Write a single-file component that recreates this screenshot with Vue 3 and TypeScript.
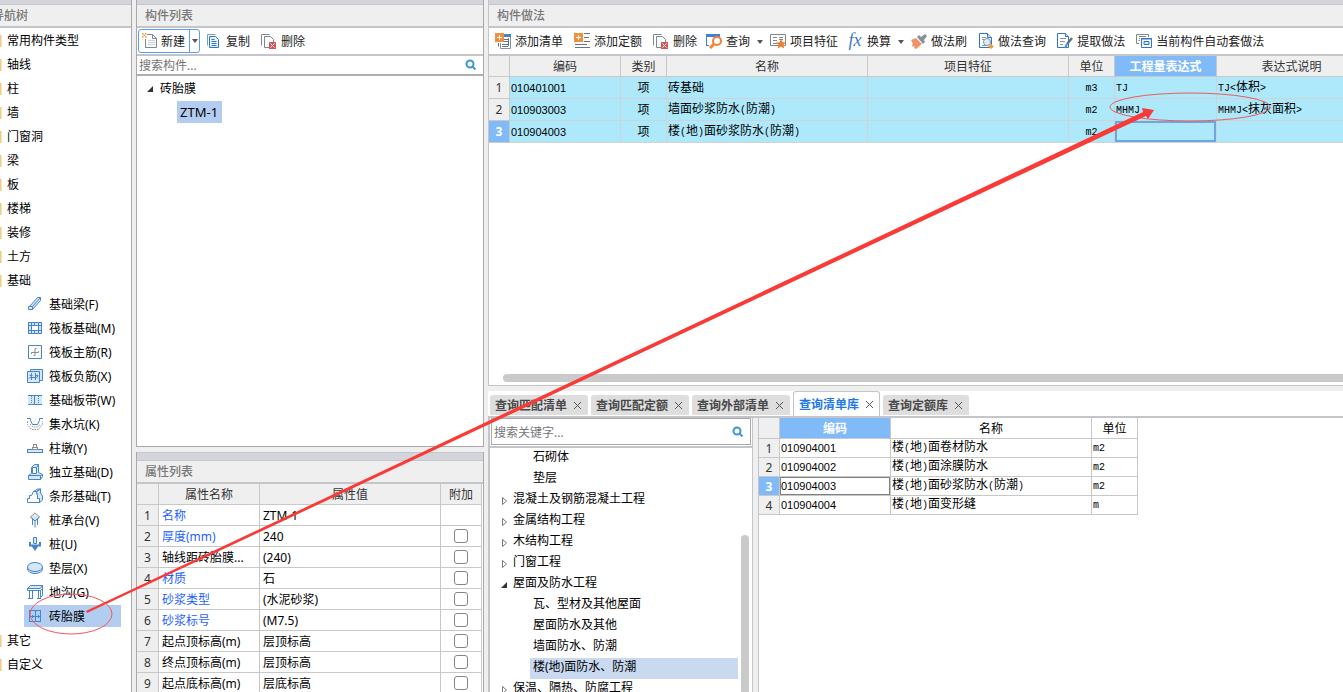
<script setup lang="ts">
import { ref } from 'vue'

interface Tool {
  icon: string
  label: string
  menu?: boolean
}

const B = 'fill="none" stroke="#4584cf"'
const L = 'fill="#d6e7f9" stroke="#4584cf"'

const icons: Record<string, string> = {
  beam: `<path ${L} d="M2.500 10.500l8-9h3v3l-8 9h-4v-3z"/><path ${B} d="M2.500 10.500h3v3M5.500 10.500l8-9"/>`,
  raft: `<g shape-rendering="crispEdges"><path ${L} d="M1.500 2.500h13v11h-13z"/><path fill="#fff" stroke="#4584cf" d="M4.500 5.500h7v5h-7z"/><path ${B} d="M4.500 2v12M11.500 2v12M1 5.500h14M1 10.500h14M7.500 2v3M7.500 11v3"/></g>`,
  rebar: `<path fill="#fff" stroke="#4584cf" d="M1.500 1.500h13v13h-13z"/><path fill="none" stroke="#858c94" d="M4.500 10v-1.500h7V7M9.500 4.500H8v7H6.500"/>`,
  negative: `<path ${L} d="M3.500 1.500h12v11h-12z"/><path ${L} d="M.5 3.500h12v11H.5z"/><path ${B} d="M4.500 5v7M8.500 5v7M2 10.500q0-1 2-1h5q2 0 2-2M2.500 7.500h3M8 7.500h3"/>`,
  band: `<g shape-rendering="crispEdges"><path fill="#d6e7f9" d="M1 3h14v10H1z"/><path ${B} d="M1 3.500h14M1 12.500h14M7.500 3v10"/><path ${B} stroke-dasharray="1 1" d="M4.500 4v9M11.500 4v9"/></g>`,
  pit: `<path ${B} d="M0 2.500h3.500v2l2 4h5l2-4v-2H16"/><path fill="none" stroke="#8d949c" stroke-dasharray="1.500 1" d="M.5 5.500v3l4 5h7l4-5v-3M3 8l3 3h5l2-3"/>`,
  pier: `<g shape-rendering="crispEdges"><path ${L} d="M.5 9.500h15v3H.5z"/><path fill="#fff" stroke="#858c94" d="M5.500 7.500h5v2h-5zM6.500 4.500h3v3h-3z"/></g>`,
  isolated: `<path ${L} d="M1.500 11.500l3-2v-6l3-3h4v8l4 2v2l-2 3h-12z"/><path fill="#fff" stroke="#4584cf" d="M5.500 9.500v-6h4v6z"/><path ${B} d="M9.500 3.500l2-3M1.500 11.500h12l2-1M13.500 11.500v4"/>`,
  strip: `<path fill="#fff" stroke="#4584cf" d="M.5 14.500v-4h2v-3h2l2-4h3l1 4v3h2v4z"/><path ${L} d="M6.500 3.500l4-2.500h3l-4 2.500zM9.500 3.500l4-2.500v4l2 3v4l-3 2.500v-4h-2v-3z"/>`,
  cap: `<path fill="#dfe3e8" stroke="#98a0a8" d="M8 .8l4.500 4L8 9 3.500 4.800z"/><path ${B} d="M3.500 5l4.500 4 4.500-4M5.500 7v6M8 9v6.500M10.500 7v6"/>`,
  pile: `<path ${L} d="M6.500 1.500h3v6h-3z"/><path fill="none" stroke="#4584cf" stroke-width="2" d="M3 6v3.500h10V6"/><path fill="#4584cf" d="M4.500 10h7L8 15z"/>`,
  cushion: `<ellipse ${L} cx="8" cy="9" rx="7.500" ry="4.500"/><ellipse ${L} cx="8" cy="7" rx="7.500" ry="4.500"/>`,
  trench: `<path ${L} d="M3.500 1.500h12l-2 3H.5z"/><path ${B} d="M.5 4.500v2h13l2-2v-3M2.500 6.500v8M5.500 6.500v8M11.500 6.500v8M13.500 6.500v7l2-2v-7M1 14.500h5M10 14.500h4"/>`,
  brick: `<g shape-rendering="crispEdges"><path ${B} d="M2.500 2.500h11v11h-11zM8.500 2.500v6M2 8.500h12M8.500 8.500v5"/><path ${B} d="M5.500 7v3M11.500 7v3"/></g>`,
  create: `<path fill="#fff" stroke="#7d8790" d="M3.500 1.500h7l4 4v9h-11z"/><path fill="none" stroke="#7d8790" d="M10.500 1.500v4h4"/><path stroke="#ccd" d="M6 7.500h7M6 9.500h7M6 11.500h7"/><path fill="#fff" d="M0 0h5v6H0z"/><path fill="#f39a2c" d="M0 0h1.500v1.500H0zM3 0h1.500v1.500H3zM1.500 1.500H3V3H1.500zM0 3h1.500v1.500H0zM3 3h1.500v1.500H3z"/>`,
  copy: `<path fill="#fff" stroke="#6f9fd8" d="M1.500 12.500v-11h8"/><path fill="#eaf3fd" stroke="#2f74c8" d="M3.500 3.500h6l3 3v8h-9z"/><path stroke="#2f74c8" d="M5.500 6.500h3M5.500 8.500h5M5.500 10.500h5M5.500 12.500h5"/>`,
  remove: `<path fill="none" stroke="#7d8790" d="M.5 12.500v-11h8"/><path fill="#fff" stroke="#7d8790" d="M3.500 14.500v-11h6l3 3v8z"/><path fill="#d95350" d="M8 9h7v7H8z"/><path stroke="#fff" d="M9.500 10.500l4 4M13.500 10.500l-4 4"/>`,
  addlist: `<path fill="#fff" stroke="#8492a0" d="M5.500 10v5.500h10V3h-6"/><path fill="#3d82d6" d="M9 1h7v3H9z"/><path stroke="#5f7387" d="M9 6.500h4M9 8.500h4M3.500 10v3.500M7 11.500h6M7 13.500h6M13.500 5v8"/><path fill="#f0903c" d="M0 0h9v9H0z"/><path stroke="#fff" d="M2 4.500h5M4.500 2v5"/>`,
  addquota: `<path stroke="#68727c" d="M10 .5h6M10 4.500h5M10 8.500h6M1 11.500h12M1 14.500h15"/><path fill="#f0903c" d="M0 0h9v9H0z"/><path stroke="#fff" d="M2 4.500h5M4.500 2v5"/>`,
  query: `<path fill="#3d82d6" d="M0 1h14v3H0z"/><path stroke="#3d82d6" d="M.5 1v12M0 12.500h3"/><circle cx="11" cy="8" r="4" fill="#fff" stroke="#f0843a" stroke-width="2"/><path stroke="#f0843a" stroke-width="3" d="M8 11l-4 4"/>`,
  feature: `<path fill="#fff" stroke="#7d8790" d="M.5 1.500h15v11H.5z"/><path stroke="#7d8790" d="M3 4.500h4M3 7.500h4M3 10.500h4M9 4.500h4M9 6.500h4"/><path fill="#f07c28" d="M11 6l1.500 3.200 3.500.3-2.600 2.300.8 3.700-3.200-1.900-3.200 1.900.8-3.700L6 9.500l3.500-.3z"/>`,
  brush: `<path fill="#f09468" d="M0 7l5-2 6 6-6 5-2-1 1-2-2 1-1-2 1-1z"/><path fill="#87919b" d="M6 4l2-2 2 2 4-3 2 2-3 4 1 2-2 2z"/>`,
  methodquery: `<path fill="#fff" stroke="#2f74c8" d="M1.500.5h8l4 4v10h-12z"/><path fill="#cfe1f6" stroke="#2f74c8" d="M9.500.5v4h4"/><path stroke="#8496aa" d="M4 4.500h4M4 6.500h2M4 12.500h4"/><circle cx="9" cy="9" r="3.500" fill="#e3edf8" stroke="#7893b5"/><path fill="#f39a2c" d="M13 11l3 2.500-3 2.500-3-2.500z"/>`,
  extract: `<path fill="#fff" stroke="#2f74c8" d="M.5.5h8l3 3v11H.5z"/><path fill="#cfe1f6" stroke="#2f74c8" d="M8.500.5v3h3"/><path stroke="#8496aa" d="M3 5.500h6M3 8.500h5M3 11.500h3"/><path stroke="#66717c" stroke-width="2.500" d="M15 5l-5 6"/><path stroke="#3a94e2" stroke-width="2" d="M10 11l-2 4"/>`,
  auto: `<path fill="#fff" stroke="#7d8790" d="M3 10.500H.5v-9h12V4M3 3.500h7M3 5.500h1M2.500 7.500H4"/><path fill="#fff" stroke="#2f74c8" d="M5.500 5.500h10v9h-10z"/><path stroke="#2f74c8" d="M5 6h11M8 8.500h5v3H8z" fill="#d6e7f9"/>`,
}

const categories = ['常用构件类型', '轴线', '柱', '墙', '门窗洞', '梁', '板', '楼梯', '装修', '土方', '基础']
const foundation = [
  { icon: 'beam', label: '基础梁(F)' },
  { icon: 'raft', label: '筏板基础(M)' },
  { icon: 'rebar', label: '筏板主筋(R)' },
  { icon: 'negative', label: '筏板负筋(X)' },
  { icon: 'band', label: '基础板带(W)' },
  { icon: 'pit', label: '集水坑(K)' },
  { icon: 'pier', label: '柱墩(Y)' },
  { icon: 'isolated', label: '独立基础(D)' },
  { icon: 'strip', label: '条形基础(T)' },
  { icon: 'cap', label: '桩承台(V)' },
  { icon: 'pile', label: '桩(U)' },
  { icon: 'cushion', label: '垫层(X)' },
  { icon: 'trench', label: '地沟(G)' },
  { icon: 'brick', label: '砖胎膜' },
]
const others = ['其它', '自定义']
const current = ref('砖胎膜')

const tools: Tool[] = [
  { icon: 'addlist', label: '添加清单' },
  { icon: 'addquota', label: '添加定额' },
  { icon: 'remove', label: '删除' },
  { icon: 'query', label: '查询', menu: true },
  { icon: 'feature', label: '项目特征' },
  { icon: 'fx', label: '换算', menu: true },
  { icon: 'brush', label: '做法刷' },
  { icon: 'methodquery', label: '做法查询' },
  { icon: 'extract', label: '提取做法' },
  { icon: 'auto', label: '当前构件自动套做法' },
]

const methods = [
  { code: '010401001', kind: '项', name: '砖基础', unit: 'm3', expr: 'TJ', note: 'TJ<体积>' },
  { code: '010903003', kind: '项', name: '墙面砂浆防水(防潮)', unit: 'm2', expr: 'MHMJ', note: 'MHMJ<抹灰面积>' },
  { code: '010904003', kind: '项', name: '楼(地)面砂浆防水(防潮)', unit: 'm2', expr: '', note: '' },
]

const props = ref([
  { name: '名称', value: 'ZTM-1', blue: true },
  { name: '厚度(mm)', value: '240', blue: true, extra: false },
  { name: '轴线距砖胎膜...', value: '(240)', blue: false, extra: false },
  { name: '材质', value: '石', blue: true, extra: false },
  { name: '砂浆类型', value: '(水泥砂浆)', blue: true, extra: false },
  { name: '砂浆标号', value: '(M7.5)', blue: true, extra: false },
  { name: '起点顶标高(m)', value: '层顶标高', blue: false, extra: false },
  { name: '终点顶标高(m)', value: '层顶标高', blue: false, extra: false },
  { name: '起点底标高(m)', value: '层底标高', blue: false, extra: false },
])

const tabs = ['查询匹配清单', '查询匹配定额', '查询外部清单', '查询清单库', '查询定额库']
const activeTab = ref('查询清单库')

const chapters = [
  { label: '石砌体', level: 2 },
  { label: '垫层', level: 2 },
  { label: '混凝土及钢筋混凝土工程', level: 1 },
  { label: '金属结构工程', level: 1 },
  { label: '木结构工程', level: 1 },
  { label: '门窗工程', level: 1 },
  { label: '屋面及防水工程', level: 1, open: true },
  { label: '瓦、型材及其他屋面', level: 2 },
  { label: '屋面防水及其他', level: 2 },
  { label: '墙面防水、防潮', level: 2 },
  { label: '楼(地)面防水、防潮', level: 2 },
  { label: '保温、隔热、防腐工程', level: 1 },
]
const chapter = ref('楼(地)面防水、防潮')

const results = [
  { code: '010904001', name: '楼(地)面卷材防水', unit: 'm2' },
  { code: '010904002', name: '楼(地)面涂膜防水', unit: 'm2' },
  { code: '010904003', name: '楼(地)面砂浆防水(防潮)', unit: 'm2' },
  { code: '010904004', name: '楼(地)面变形缝', unit: 'm' },
]

const componentSearch = ref('')
const keyword = ref('')

// Splits a grid text into half-width and full-width runs.
function runs(text: string): { text: string; half: boolean }[] {
  return (text.match(/[\x20-\x7e]+|[^\x20-\x7e]+/g) ?? []).map((t) => ({
    text: t,
    half: t.charCodeAt(0) < 127,
  }))
}
</script>

<template>
  <div class="app">
    <nav class="nav panel">
      <div class="strip"></div>
      <h2 class="title nav-title">导航树</h2>
      <ul class="tree">
        <li v-for="c in categories" :key="c"><button class="category">{{ c }}</button></li>
        <li v-for="f in foundation" :key="f.label">
          <button class="leaf" :class="{ on: current === f.label }" @click="current = f.label">
            <svg class="icon" viewBox="0 0 16 16" v-html="icons[f.icon]"></svg>{{ f.label }}
          </button>
        </li>
        <li v-for="c in others" :key="c"><button class="category">{{ c }}</button></li>
      </ul>
    </nav>

    <div class="middle">
      <section class="panel components">
        <div class="strip"></div>
        <h2 class="title">构件列表</h2>
        <div class="toolbar">
          <div class="split">
            <button class="split-main"><svg class="icon" viewBox="0 0 16 16" v-html="icons.create"></svg>新建</button>
            <button class="split-arrow" aria-label="新建选项"><i class="caret"></i></button>
          </div>
          <button class="tool"><svg class="icon" viewBox="0 0 16 16" v-html="icons.copy"></svg>复制</button>
          <button class="tool"><svg class="icon" viewBox="0 0 16 16" v-html="icons.remove"></svg>删除</button>
        </div>
        <div class="search">
          <input v-model="componentSearch" type="text" placeholder="搜索构件..." aria-label="搜索构件" />
          <svg class="lens" viewBox="0 0 12 12"><circle cx="5" cy="5" r="3.500" /><path d="M7.500 7.500l3 3" /></svg>
        </div>
        <ul class="tree">
          <li><button class="group"><svg class="tri" viewBox="0 0 8 8"><path class="open" d="M7 1v6H1z" /></svg>砖胎膜</button></li>
          <li><button class="item">ZTM-1</button></li>
        </ul>
      </section>

      <section class="panel properties">
        <div class="strip"></div>
        <h2 class="title">属性列表</h2>
        <table class="props">
          <colgroup><col class="w22" /><col class="w101" /><col /><col class="w41" /></colgroup>
          <thead>
            <tr><th></th><th>属性名称</th><th>属性值</th><th>附加</th></tr>
          </thead>
          <tbody>
            <tr v-for="(p, i) in props" :key="p.name">
              <th>{{ i + 1 }}</th>
              <td :class="{ blue: p.blue }">{{ p.name }}</td>
              <td>{{ p.value }}</td>
              <td class="check"><input v-if="p.extra !== undefined" v-model="p.extra" type="checkbox" :aria-label="p.name" /></td>
            </tr>
          </tbody>
        </table>
      </section>
    </div>

    <main class="right">
      <section class="panel methods">
        <div class="strip"></div>
        <h2 class="title">构件做法</h2>
        <div class="toolbar">
          <button v-for="t in tools" :key="t.label" class="tool" :class="{ menu: t.menu }">
            <span v-if="t.icon === 'fx'" class="icon fx">fx</span>
            <svg v-else class="icon" viewBox="0 0 16 16" v-html="icons[t.icon]"></svg>{{ t.label }}<i v-if="t.menu" class="caret"></i>
          </button>
        </div>
        <table class="grid bill">
          <colgroup>
            <col class="w21" /><col class="w111" /><col class="w46" /><col class="w201" /><col class="w201" />
            <col class="w46" /><col class="w102" /><col class="w150" />
          </colgroup>
          <thead>
            <tr>
              <th></th><th>编码</th><th>类别</th><th>名称</th><th>项目特征</th><th>单位</th>
              <th class="on">工程量表达式</th><th>表达式说明</th>
            </tr>
          </thead>
          <tbody>
            <tr v-for="(m, i) in methods" :key="m.code">
              <th :class="{ on: i === 2 }">{{ i + 1 }}</th>
              <td class="code">{{ m.code }}</td>
              <td class="mid">{{ m.kind }}</td>
              <td><span v-for="(r, k) in runs(m.name)" :key="k" :class="{ half: r.half }">{{ r.text }}</span></td>
              <td></td>
              <td class="mid"><span class="half">{{ m.unit }}</span></td>
              <td :class="{ cursor: i === 2 }"><span class="half">{{ m.expr }}</span></td>
              <td><span v-for="(r, k) in runs(m.note)" :key="k" :class="{ half: r.half }">{{ r.text }}</span></td>
            </tr>
          </tbody>
        </table>
        <div class="hscroll"></div>
      </section>

      <section class="library">
        <div class="tabs">
          <div v-for="t in tabs" :key="t" class="tab" :class="{ on: activeTab === t }">
            <button class="tab-name" @click="activeTab = t">{{ t }}</button>
            <button class="close" :aria-label="'关闭' + t">
              <svg viewBox="0 0 9 9"><path d="M1 1l7 7M8 1l-7 7" /></svg>
            </button>
          </div>
        </div>
        <div class="lib-body">
          <div class="chapters">
            <div class="search boxed">
              <input v-model="keyword" type="text" placeholder="搜索关键字..." aria-label="搜索关键字" />
              <svg class="lens" viewBox="0 0 12 12"><circle cx="5" cy="5" r="3.500" /><path d="M7.500 7.500l3 3" /></svg>
            </div>
            <div class="chapter-list">
              <ul>
                <li v-for="c in chapters" :key="c.label">
                  <button :class="['chapter', 'level' + c.level, { on: chapter === c.label }]" @click="chapter = c.label">
                    <svg v-if="c.level === 1" class="tri" viewBox="0 0 8 8">
                      <path v-if="c.open" class="open" d="M7 1v6H1z" /><path v-else class="shut" d="M2.500 .5L6.500 4l-4 3.500z" />
                    </svg>{{ c.label }}
                  </button>
                </li>
              </ul>
              <div class="vscroll"></div>
            </div>
          </div>
          <div class="results">
            <table class="grid found">
              <colgroup><col class="w21" /><col class="w111" /><col class="w201" /><col class="w46" /></colgroup>
              <thead>
                <tr><th></th><th class="on">编码</th><th>名称</th><th>单位</th></tr>
              </thead>
              <tbody>
                <tr v-for="(r, i) in results" :key="r.code">
                  <th :class="{ on: i === 2 }">{{ i + 1 }}</th>
                  <td class="code" :class="{ focus: i === 2 }">{{ r.code }}</td>
                  <td><span v-for="(s, k) in runs(r.name)" :key="k" :class="{ half: s.half }">{{ s.text }}</span></td>
                  <td><span class="half">{{ r.unit }}</span></td>
                </tr>
              </tbody>
            </table>
          </div>
        </div>
      </section>
    </main>

    <svg class="marks" aria-hidden="true">
      <ellipse cx="71" cy="614" rx="41" ry="20" />
      <ellipse cx="1190" cy="107" rx="80" ry="14" />
      <path d="M86 611L1143 112l-1-4 12 2-6 9-2-3L87 613z" />
    </svg>
  </div>
</template>

<style>
body {
  margin: 0;
  overflow: hidden;
}
</style>

<style scoped>
.app {
  position: relative;
  display: grid;
  grid-template-columns: 132px 348px minmax(0, 1fr);
  column-gap: 4px;
  height: 100vh;
  overflow: hidden;
  background: #efefef;
  color: #000;
  font: 12px/18px "Noto Sans", "Noto Sans CJK SC", sans-serif;
}
.app * {
  box-sizing: border-box;
}
button {
  display: flex;
  align-items: center;
  margin: 0;
  padding: 0;
  border: 0;
  background: none;
  color: inherit;
  font: inherit;
  white-space: nowrap;
}
input {
  font: inherit;
}
ul {
  margin: 0;
  padding: 0;
  list-style: none;
}
.icon {
  flex: none;
  width: 16px;
  height: 16px;
  margin-top: -2px;
}
.panel {
  background: #fff;
}
.strip {
  height: 5px;
  background: #d4d5da;
  border-bottom: 1px solid #c6c7ce;
}
.title {
  height: 23px;
  margin: 0;
  padding-left: 8px;
  border-bottom: 2px solid #c4c4cb;
  background: #efefef;
  color: #787878;
  font-size: 12px;
  font-weight: 500;
  line-height: 21px;
}

/* Navigation */
.nav {
  border-right: 1px solid #a9a9a9;
  overflow: hidden;
}
.nav-title {
  padding: 0;
  text-indent: -8px;
}
.tree li {
  display: flex;
  align-items: center;
  height: 24px;
}
.category {
  height: 24px;
  padding-top: 2px;
  gap: 5px;
}
.category::before {
  content: "";
  width: 2px;
  height: 12px;
  background: linear-gradient(90deg, #f2cb85 1px, #f9e3b8 1px);
}
.leaf {
  gap: 6px;
  width: 97px;
  height: 22px;
  margin-left: 24px;
  padding: 2px 0 0 3px;
}
.leaf.on {
  background: #b3cdf0;
}

/* Component list and properties */
.middle {
  display: flex;
  flex-direction: column;
  gap: 5px;
  min-height: 0;
}
.middle .panel {
  border-left: 1px solid #a9a9a9;
  border-right: 1px solid #a9a9a9;
}
.components {
  flex: 1;
  border-bottom: 1px solid #a9a9a9;
}
.properties {
  height: 240px;
  flex: none;
  overflow: hidden;
}
.properties .strip {
  height: 9px;
  border-top: 1px solid #c6c7ce;
}
.toolbar {
  display: flex;
  align-items: center;
  gap: 1px;
  height: 28px;
  padding: 0 1px;
  border-bottom: 2px solid #c4c4cb;
  color: #222;
}
.tool {
  gap: 4px;
  height: 22px;
  padding: 2px 5px 0;
}
.tool.menu {
  padding: 2px 1px 0 3px;
}
.caret {
  width: 0;
  height: 0;
  border: 3px solid transparent;
  border-top: 4px solid #555;
  border-bottom: 0;
}
.tool .caret {
  margin-left: 3px;
}
.fx {
  color: #3f7cc4;
  font: italic 18px/14px "Liberation Serif", serif;
}
.split {
  display: flex;
  height: 24px;
  border: 1px solid #5b9fe6;
  border-radius: 3px;
}
.split-main {
  gap: 3px;
  padding: 2px 4px 0 3px;
}
.split-arrow {
  padding: 0 1px 0 2px;
  border-left: 1px solid #5b9fe6;
}
.search {
  display: flex;
  align-items: center;
  height: 20px;
  padding-right: 6px;
  border-bottom: 2px solid #aeaeae;
  background: #fff;
}
.search input {
  flex: 1;
  min-width: 0;
  height: 18px;
  padding: 2px 2px 0;
  border: 0;
  outline: 0;
  background: none;
}
.search input::placeholder {
  color: #757575;
  opacity: 1;
}
.lens {
  width: 12px;
  height: 12px;
  fill: none;
  stroke: #3f97cf;
  stroke-width: 2;
}
.tri {
  flex: none;
  width: 8px;
  height: 8px;
}
.open {
  fill: #333;
}
.shut {
  fill: #fff;
  stroke: #777;
}
.group {
  gap: 6px;
  padding: 2px 0 0 9px;
}
.item {
  height: 22px;
  margin-left: 40px;
  padding: 0 4px 0 3px;
  background: #b3cdf0;
  font-size: 13px;
}

/* Tables */
table {
  table-layout: fixed;
  border-collapse: separate;
  border-spacing: 0;
}
th,
td {
  overflow: hidden;
  padding: 0;
  border-right: 1px solid #c8c8c8;
  border-bottom: 1px solid #c8c8c8;
  font-weight: 400;
  white-space: nowrap;
  line-height: 18px;
}
th {
  background: #efefef;
  color: #333;
}
thead th {
  padding-top: 2px;
}
.w21 { width: 21px; }
.w22 { width: 22px; }
.w41 { width: 41px; }
.w46 { width: 46px; }
.w101 { width: 101px; }
.w102 { width: 102px; }
.w111 { width: 111px; }
.w150 { width: 150px; }
.w201 { width: 201px; }
.props {
  width: 345px;
}
.props th,
.props td {
  height: 21px;
  padding-top: 2px;
}
.props td {
  padding-left: 3px;
}
.props .blue {
  color: #1f5fff;
}
.props .check {
  padding: 0;
  text-align: center;
}
.check input {
  display: block;
  width: 14px;
  height: 14px;
  margin: 0 auto;
  border: 1px solid #858585;
  border-radius: 3px;
  appearance: none;
  background: #fff;
}
.check input:checked {
  background: #4584cf;
}
.grid th.on {
  background: #80baf9;
  color: #fff;
  font-weight: 700;
}
.grid td {
  padding-left: 1px;
}
.grid .mid {
  padding: 0;
  text-align: center;
}
.code {
  font-family: "Liberation Sans", sans-serif;
  font-size: 11px;
}
.half {
  font-family: "Liberation Mono", monospace;
  font-size: 10px;
}
.bill {
  width: 878px;
}
.bill thead th {
  height: 21px;
}
.bill tbody th,
.bill td {
  height: 22px;
}
.bill td {
  border-color: #d0d3d6;
  background: #ade8fb;
}
.bill .cursor {
  box-shadow: inset 0 0 0 2px #6ba6e6;
}
.found {
  width: 379px;
}
.found thead th {
  height: 21px;
}
.found thead th:nth-child(n + 3) {
  background: #fff;
  color: #000;
}
.found tbody th,
.found td {
  height: 19px;
  line-height: 14px;
}
.found tbody th {
  padding-top: 2px;
}
.found .focus {
  box-shadow: inset 0 0 0 1px #808080;
}

/* Right side */
.right {
  display: flex;
  flex-direction: column;
  gap: 5px;
  min-width: 0;
  min-height: 0;
}
.methods {
  display: flex;
  flex-direction: column;
  flex: 0 0 386px;
  overflow: hidden;
  border-left: 1px solid #c4c4cb;
  border-bottom: 1px solid #c4c4c4;
}
.hscroll {
  flex: none;
  height: 8px;
  margin: auto 0 3px 14px;
  border-radius: 4px 0 0 4px;
  background: #cacaca;
}
.library {
  display: flex;
  flex: 1;
  flex-direction: column;
  min-height: 0;
  background: #fff;
}
.tabs {
  display: flex;
  flex: none;
  align-items: flex-end;
  gap: 3px;
  height: 27px;
  padding-left: 2px;
  border-bottom: 2px solid #c4c4cb;
}
.tab {
  display: flex;
  gap: 6px;
  height: 20px;
  margin-bottom: 1px;
  padding: 0 6px 0 5px;
  border-radius: 3px 3px 0 0;
  background: #dedede;
  color: #484848;
  font-weight: 700;
}
.tab-name {
  padding-top: 2px;
}
.tab.on {
  height: 25px;
  margin-bottom: 0;
  padding: 0 5px;
  border: 1px solid #c4c4cb;
  border-bottom: 0;
  background: #fff;
  color: #1e78e6;
}
.close svg {
  width: 9px;
  height: 9px;
  stroke: #555;
}
.lib-body {
  display: grid;
  grid-template-columns: 265px minmax(0, 1fr);
  column-gap: 5px;
  flex: 1;
  min-height: 0;
  background: #efefef;
}
.chapters {
  display: flex;
  flex-direction: column;
  min-height: 0;
  border-left: 2px solid #c4c4cb;
  border-right: 1px solid #c4c4cb;
  background: #fff;
}
.boxed {
  flex: none;
  height: 27px;
  margin: 0 1px 1px;
  border: 1px solid #a9a9a9;
}
.chapter-list {
  display: flex;
  flex: 1;
  min-height: 0;
  overflow: hidden;
  border-top: 2px solid #c4c4cb;
}
.chapter-list ul {
  flex: 1;
}
.chapter {
  height: 21px;
  padding-bottom: 4px;
  line-height: 17px;
}
.level1 {
  gap: 5px;
  padding-left: 10px;
}
.level1 .tri {
  margin-top: 4px;
}
.level2 {
  width: 208px;
  margin-left: 40px;
  padding-left: 3px;
}
.chapter.on {
  background: #c8d9f0;
}
.vscroll {
  width: 8px;
  margin: 87px 3px 0 0;
  border-radius: 4px 4px 0 0;
  background: #cacaca;
}
.results {
  overflow: hidden;
  border-left: 1px solid #c4c4cb;
  background: #fff;
}
.marks {
  position: absolute;
  inset: 0;
  width: 100%;
  height: 100%;
  pointer-events: none;
  fill: none;
  stroke: #ee5a5c;
}
.marks path {
  fill: #f93a37;
  stroke: none;
}
</style>
